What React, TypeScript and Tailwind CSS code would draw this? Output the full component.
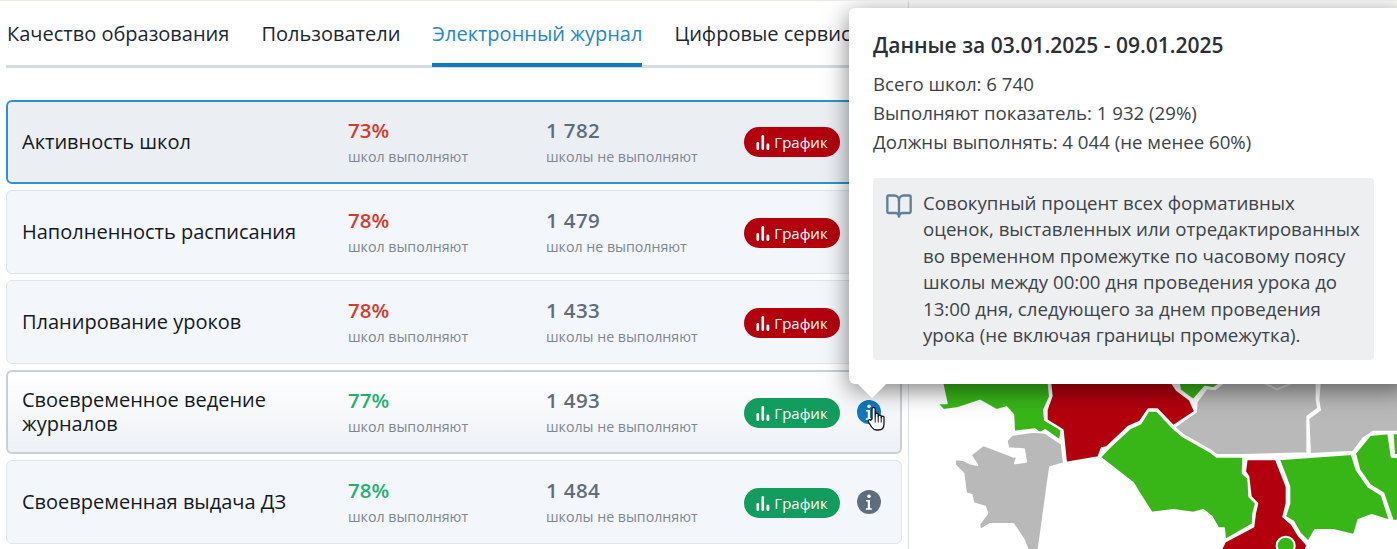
import { BookOpen } from "lucide-react";

const tabs = ["Качество образования", "Пользователи", "Электронный журнал", "Цифровые сервисы"];

type Row = {
  title: string;
  percent: string;
  count: string;
  countLabel: string;
  ok: boolean;
  state?: "active" | "hover";
};

const rows: Row[] = [
  { title: "Активность школ", percent: "73%", count: "1 782", countLabel: "школы не выполняют", ok: false, state: "active" },
  { title: "Наполненность расписания", percent: "78%", count: "1 479", countLabel: "школ не выполняют", ok: false },
  { title: "Планирование уроков", percent: "78%", count: "1 433", countLabel: "школы не выполняют", ok: false },
  { title: "Своевременное ведение журналов", percent: "77%", count: "1 493", countLabel: "школы не выполняют", ok: true, state: "hover" },
  { title: "Своевременная выдача ДЗ", percent: "78%", count: "1 484", countLabel: "школы не выполняют", ok: true },
];

const GREEN = "#38b618";
const RED = "#b3000e";
const GRAY = "#b9b9b9";

// region outlines, in units of a third of a pixel
const regions: { fill: string; points: string }[] = [
  { fill: GREEN, points: "125,30 140,100 112,100 130,120 170,115 240,92 290,120 320,112 340,135 342,185 365,182 405,178 420,190 435,180 480,212 485,180 435,150 432,120 450,80 445,30" },
  { fill: RED, points: "450,30 455,78 440,120 440,150 488,180 498,278 595,262 605,235 620,232 685,170 720,155 745,118 772,118 820,168 885,125 870,90 830,60 810,30" },
  { fill: GREEN, points: "835,30 840,60 880,90 915,50 940,55 975,30" },
  { fill: GRAY, points: "890,95 920,55 945,58 980,30 1250,30 1250,90 1255,115 1222,140 1222,250 1030,255 950,255 930,240 850,195 822,172 888,125" },
  { fill: GRAY, points: "1260,30 1495,30 1495,185 1420,185 1390,205 1360,245 1230,252 1225,145 1260,120 1255,90" },
  { fill: GREEN, points: "600,262 625,235 690,175 722,160 745,122 770,122 820,175 850,200 930,245 950,260 1030,260 1028,310 1045,325 1048,380 1068,400 1060,430 1058,462 975,510 972,475 955,475 935,440 910,420 880,428 820,420 755,428 715,365 700,340" },
  { fill: RED, points: "1040,268 1128,268 1160,350 1160,400 1150,440 1175,462 1195,495 1222,525 1215,545 960,545 975,515 1060,470 1065,430 1072,400 1052,380 1045,320 1035,305" },
  { fill: GREEN, points: "1137,268 1355,252 1370,300 1405,350 1445,375 1470,452 1415,435 1375,450 1362,495 1300,480 1245,480 1225,515 1200,490 1180,455 1155,440 1168,400 1168,350" },
  { fill: GREEN, points: "1365,250 1410,195 1465,190 1475,260 1495,262 1495,452 1478,452 1450,370 1410,345 1378,300" },
  { fill: GREEN, points: "1478,190 1495,190 1495,255 1482,255" },
  { fill: GRAY, points: "165,268 190,270 210,280 232,285 212,255 250,225 340,260 352,258 345,280 378,275 372,238 325,235 320,212 335,195 400,185 435,188 485,222 492,280 450,292 415,545 385,545 372,510 340,462 270,462 240,480 238,462 262,430 255,410 220,400 215,375 198,370 190,310 165,285" },
];

function RegionMap() {
  return (
    <svg viewBox="27 0 1464 537" className="block h-[179px] w-[488px]">
      {regions.map((r, i) => (
        <polygon key={i} points={r.points} fill={r.fill} stroke="#ffffff" strokeWidth={6} strokeLinejoin="round" />
      ))}
      <polyline points="1095,40 1130,58 1175,40" fill="none" stroke="#d8d8d8" strokeWidth={6} />
      <circle cx={1157} cy={527} r={27} fill={GREEN} stroke="#ffffff" strokeWidth={6} />
    </svg>
  );
}

function BarsIcon() {
  return (
    <svg width="14" height="15" viewBox="0 0 14 15" fill="#ffffff">
      <rect x="0.5" y="7" width="2.6" height="8" rx="1.3" />
      <rect x="5.5" y="0" width="2.6" height="15" rx="1.3" />
      <rect x="10.5" y="8.5" width="2.8" height="6.5" rx="1.3" />
    </svg>
  );
}

function InfoIcon({ color }: { color: string }) {
  return (
    <svg width="24" height="24" viewBox="0 0 24 24" className="shrink-0">
      <circle cx="12" cy="12" r="12" fill={color} />
      <circle cx="12" cy="6.2" r="1.8" fill="#ffffff" />
      <path d="M9 10.1h4v8.1h1.8v1.5H8.9v-1.5h1.9v-6.6H9z" fill="#ffffff" />
    </svg>
  );
}

function HandCursor() {
  return (
    <svg width="19" height="25" viewBox="0 0 19 25" className="absolute left-[10px] top-[6px]">
      <path
        d="M5 13V3a1.6 1.6 0 0 1 3.2 0v7.5V8.6a1.5 1.5 0 0 1 3 0v2a1.5 1.5 0 0 1 3 0v1a1.4 1.4 0 0 1 2.8 0V18c0 3.4-2 6-5.5 6H9.5C7 24 6 23 4.6 21L1.4 15.8c-.8-1.5 1.2-2.8 2.3-1.6z"
        fill="#ffffff"
        stroke="#14161a"
        strokeWidth="1.3"
        strokeLinejoin="round"
      />
      <path d="M8.2 10.5v6M11.2 10.5v6M14.2 11.5v5" stroke="#14161a" strokeWidth="1" fill="none" />
    </svg>
  );
}

function IndicatorCard({ row }: { row: Row }) {
  const frame =
    row.state === "active"
      ? "border-2 border-[#2a93d5] bg-[#ebeff4] pl-[14px]"
      : row.state === "hover"
        ? "border-2 border-[#c8d0d8] bg-gradient-to-b from-white to-[#eef1f5] pl-[14px]"
        : "border border-[#dfe5ea] bg-[#f3f6fa] pl-[15px]";

  return (
    <div className={`flex h-[84px] items-center rounded-md ${frame}`}>
      <div className="w-[326px] pr-4 text-[20px] leading-6 font-medium text-[#14191f]">{row.title}</div>
      <div className="w-[198px] pb-[2px]">
        <div className={`text-[20.5px] leading-7 font-semibold ${row.ok ? "text-[#22b06d]" : "text-[#d8392b]"}`}>
          {row.percent}
        </div>
        <div className="mt-[4px] text-[14.2px] leading-[18px] text-[#7a8794]">школ выполняют</div>
      </div>
      <div className="w-[198px] pb-[2px]">
        <div className="text-[20.5px] leading-7 font-semibold tracking-[0.4px] text-[#5d6d7e]">{row.count}</div>
        <div className="mt-[4px] text-[14.2px] leading-[18px] text-[#7a8794]">{row.countLabel}</div>
      </div>
      <button
        className={`flex h-[30px] w-[96px] items-center justify-center gap-1 rounded-full text-[15px] text-white ${
          row.ok ? "bg-[#129c5e]" : "bg-[#b3000e]"
        } ${row.state === "active" ? "" : "mt-[2px]"}`}
      >
        <BarsIcon />
        График
      </button>
      <div className="relative ml-[17px]">
        <InfoIcon color={row.state === "hover" ? "#1179bd" : "#5d6d7e"} />
        {row.state === "hover" && <HandCursor />}
      </div>
    </div>
  );
}

function Popover() {
  return (
    <div className="absolute left-[849px] top-[7px] h-[376px] w-[560px] rounded-md bg-white pl-[24px] pr-[35px] pt-[23px] text-[#3c434a] shadow-[0_6px_24px_rgba(0,0,0,0.5)]">
      <div className="text-[21px] leading-7 font-semibold text-[#2b3036]">Данные за 03.01.2025 - 09.01.2025</div>
      <div className="mt-[10px] text-[18.65px] leading-[29px]">
        <div>Всего школ: 6 740</div>
        <div>Выполняют показатель: 1 932 (29%)</div>
        <div>Должны выполнять: 4 044 (не менее 60%)</div>
      </div>
      <div className="mt-[22px] flex h-[182px] w-[501px] rounded bg-[#eeeff1] pl-[12px] pt-[11px]">
        <BookOpen size={28} strokeWidth={2} color="#5f7f9b" className="mt-[3px] shrink-0" />
        <p className="ml-[10px] mt-px w-[445px] text-[18.65px] leading-[26.4px]">
          Совокупный процент всех формативных оценок, выставленных или отредактированных во временном промежутке по
          часовому поясу школы между 00:00 дня проведения урока до 13:00 дня, следующего за днем проведения урока (не
          включая границы промежутка).
        </p>
      </div>
      <div className="absolute bottom-[-10px] left-[13px] h-5 w-5 rotate-45 bg-white" />
    </div>
  );
}

export default function App() {
  return (
    <div className="relative h-[549px] w-[1397px] overflow-hidden border-t border-[#f0e6e4] bg-white font-['Open_Sans','Noto_Sans',sans-serif]">
      <div className="flex h-full">
        <div className="w-[902px] shrink-0 pl-[6px]">
          <div className="flex h-[67px] gap-[32px] border-b-[3px] border-[#d3dce2] pt-[18px] text-[20px] leading-[30px] whitespace-nowrap">
            {tabs.map((tab, i) => (
              <div
                key={tab}
                className={
                  i === 2
                    ? "h-[48px] border-b-4 border-[#1179bd] text-[#2488c8]"
                    : i === 0
                      ? "pl-px text-[#1c2733]"
                      : "text-[#1c2733]"
                }
              >
                {tab}
              </div>
            ))}
          </div>
          <div className="mt-[32px] flex flex-col gap-[6px]">
            {rows.map((row) => (
              <IndicatorCard key={row.title} row={row} />
            ))}
          </div>
        </div>
        <div className="ml-[6px] flex flex-1 flex-col justify-end border-l border-[#dbe3ea]">
          <RegionMap />
        </div>
      </div>
      <Popover />
    </div>
  );
}
